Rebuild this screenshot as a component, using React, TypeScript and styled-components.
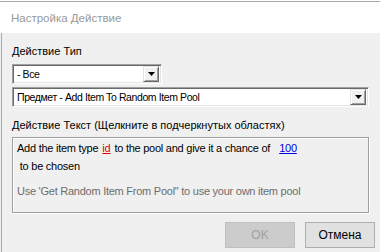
import styled, { createGlobalStyle } from "styled-components";

const Global = createGlobalStyle`
  html, body {
    margin: 0;
    padding: 0;
    background: #f0f0f0;
  }
  body {
    font-family: "Liberation Sans", Arial, sans-serif;
    font-size: 11px;
  }
`;

const Window = styled.div`
  width: 380px;
  height: 252px;
  box-sizing: border-box;
  display: flex;
  flex-direction: column;
  background: #f0f0f0;
  border-top: 1px solid #fff;
  overflow: hidden;
`;

const TitleBar = styled.div`
  height: 32px;
  flex: none;
  box-sizing: border-box;
  background: #fff;
  border-top: 1px solid #a9a9a9;
  padding-left: 11px;
  display: flex;
  align-items: center;
  color: #999;
  font-size: 11.5px;
`;

const Body = styled.div`
  flex: 1;
  border-left: 1px solid #a9a9a9;
  margin-left: 1px;
  padding: 10px 11px 0 10px;
  display: flex;
  flex-direction: column;
`;

const Label = styled.div`
  height: 16px;
  line-height: 16px;
  color: #000;
`;

const Select = styled.div<{ $width: number }>`
  width: ${(p) => p.$width}px;
  height: 20px;
  box-sizing: border-box;
  background: #fff;
  border-top: 1px solid #a0a0a0;
  border-left: 1px solid #a0a0a0;
  border-right: 1px solid #fff;
  border-bottom: 1px solid #fff;
  box-shadow: inset 1px 1px 0 #696969, inset -1px -1px 0 #e3e3e3;
  display: flex;
  align-items: center;
  padding: 0 2px 0 4px;
`;

const SelectText = styled.span`
  flex: 1;
  white-space: nowrap;
  color: #000;
  font-size: 10.5px;
  letter-spacing: -0.4px;
`;

const ArrowButton = styled.div`
  width: 16px;
  height: 16px;
  box-sizing: border-box;
  background: #f0f0f0;
  border-top: 1px solid #e3e3e3;
  border-left: 1px solid #e3e3e3;
  border-right: 1px solid #696969;
  border-bottom: 1px solid #696969;
  box-shadow: inset 1px 1px 0 #fff, inset -1px -1px 0 #a0a0a0;
  display: flex;
  align-items: center;
  justify-content: center;
`;

const TextPanel = styled.div`
  margin-top: 4px;
  width: 357px;
  height: 76px;
  box-sizing: border-box;
  border: 1px solid #a0a0a0;
  box-shadow: 1px 1px 0 #fff, inset 1px 1px 0 #fff;
  padding: 1px 4px;
  color: #000;
`;

const Line = styled.div<{ $muted?: boolean }>`
  line-height: 18px;
  white-space: nowrap;
  letter-spacing: -0.25px;
  color: ${(p) => (p.$muted ? "#6d6d6d" : "#000")};
`;

const Param = styled.span<{ $color: string; $before?: number }>`
  color: ${(p) => p.$color};
  text-decoration: underline;
  margin: 0 4px 0 ${(p) => p.$before ?? 4}px;
`;

const Footer = styled.div`
  display: flex;
  justify-content: flex-end;
  gap: 10px;
  margin-top: 9px;
  margin-right: -6px;
`;

const Button = styled.div<{ $disabled?: boolean }>`
  width: 70px;
  height: 26px;
  box-sizing: border-box;
  display: flex;
  align-items: center;
  justify-content: center;
  font-size: 12px;
  background: ${(p) => (p.$disabled ? "#cccccc" : "#e1e1e1")};
  border: 1px solid ${(p) => (p.$disabled ? "#bfbfbf" : "#adadad")};
  color: ${(p) => (p.$disabled ? "#a0a0a0" : "#000")};
`;

function Arrow() {
  return (
    <ArrowButton>
      <svg width="7" height="4" viewBox="0 0 7 4">
        <path d="M0 0h7L3.5 4z" fill="#000" />
      </svg>
    </ArrowButton>
  );
}

export default function App() {
  return (
    <Window>
      <Global />
      <TitleBar>Настройка Действие</TitleBar>
      <Body>
        <Label>Действие Тип</Label>
        <div style={{ height: 5 }} />
        <Select $width={150}>
          <SelectText>- Все</SelectText>
          <Arrow />
        </Select>
        <div style={{ height: 3 }} />
        <Select $width={357}>
          <SelectText>Предмет - Add Item To Random Item Pool</SelectText>
          <Arrow />
        </Select>
        <div style={{ height: 10 }} />
        <Label>Действие Текст (Щелкните в подчеркнутых областях)</Label>
        <TextPanel>
          <Line>
            Add the item type<Param $color="#e00000">id</Param>to the pool and give it a chance of
            <Param $color="#0000e0" $before={9}>100</Param>
          </Line>
          <Line>&nbsp;to be chosen</Line>
          <Line $muted style={{ marginTop: 7 }}>
            Use 'Get Random Item From Pool" to use your own item pool
          </Line>
        </TextPanel>
        <Footer>
          <Button $disabled>OK</Button>
          <Button>Отмена</Button>
        </Footer>
      </Body>
    </Window>
  );
}
